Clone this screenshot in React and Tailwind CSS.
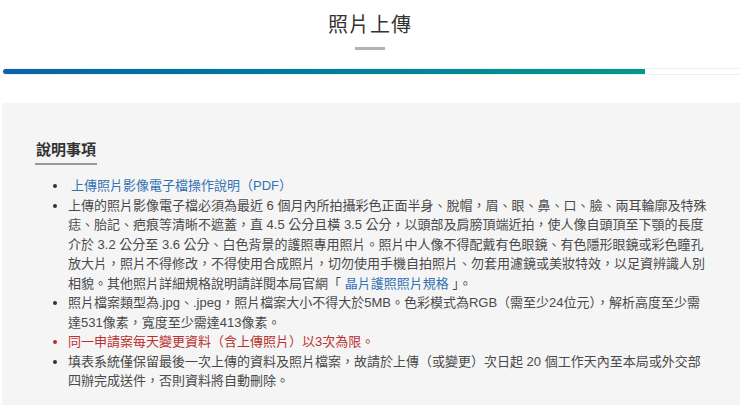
import React from 'react';

const font = { fontFamily: '"Liberation Sans", "Noto Sans CJK TC", sans-serif' };

export default function App() {
  return (
    <div className="min-h-screen bg-white text-[#333]" style={font}>
      <div className="pt-[12px] text-center">
        <h1 className="text-[20px] leading-[26px] font-normal tracking-[1px] text-[#333]">照片上傳</h1>
        <div className="mx-auto mt-[9px] h-[3px] w-[30px] bg-[#b3b3b3]"></div>
      </div>

      <div className="mt-[18px] ml-[3px] h-[7px] border-y border-[#f0f0f0] bg-white">
        <div className="h-full w-[642px] rounded-l-full bg-gradient-to-r from-[#0b62a9] to-[#03998b]"></div>
      </div>

      <div className="mt-[28px] ml-[2px] rounded-tl-[4px] bg-[#f5f5f5] pl-[33px] pr-[28px] pt-[35px] pb-6">
        <h2 className="inline-block border-b-2 border-[#999] px-[1px] pb-[3px] text-[15px] leading-[20px] font-bold text-[#333]">
          說明事項
        </h2>
        <ul className="mt-[11px] list-disc pl-[33px] text-[13px] leading-[19.5px] text-[#4a4a4a] marker:text-[#333]">
          <li className="pl-[3px]">
            <a href="#" className="text-[#3372b3]">上傳照片影像電子檔操作說明（PDF）</a>
          </li>
          <li>
            上傳的照片影像電子檔必須為最近 6 個月內所拍攝彩色正面半身、脫帽，眉、眼、鼻、口、臉、兩耳輪廓及特殊痣、胎記、疤痕等清晰不遮蓋，直 4.5 公分且橫 3.5 公分，以頭部及肩膀頂端近拍，使人像自頭頂至下顎的長度介於 3.2 公分至 3.6 公分、白色背景的護照專用照片。照片中人像不得配戴有色眼鏡、有色隱形眼鏡或彩色瞳孔放大片，照片不得修改，不得使用合成照片，切勿使用手機自拍照片、勿套用濾鏡或美妝特效，以足資辨識人別相貌。其他照片詳細規格說明請詳閱本局官網「 <a href="#" className="text-[#3372b3]">晶片護照照片規格</a> 」。
          </li>
          <li>照片檔案類型為.jpg、.jpeg，照片檔案大小不得大於5MB。色彩模式為RGB（需至少24位元），解析高度至少需達531像素，寬度至少需達413像素。</li>
          <li className="text-[#b8312f] marker:text-[#b8312f]">同一申請案每天變更資料（含上傳照片）以3次為限。</li>
          <li>填表系統僅保留最後一次上傳的資料及照片檔案，故請於上傳（或變更）次日起 20 個工作天內至本局或外交部四辦完成送件，否則資料將自動刪除。</li>
        </ul>
      </div>
    </div>
  );
}
